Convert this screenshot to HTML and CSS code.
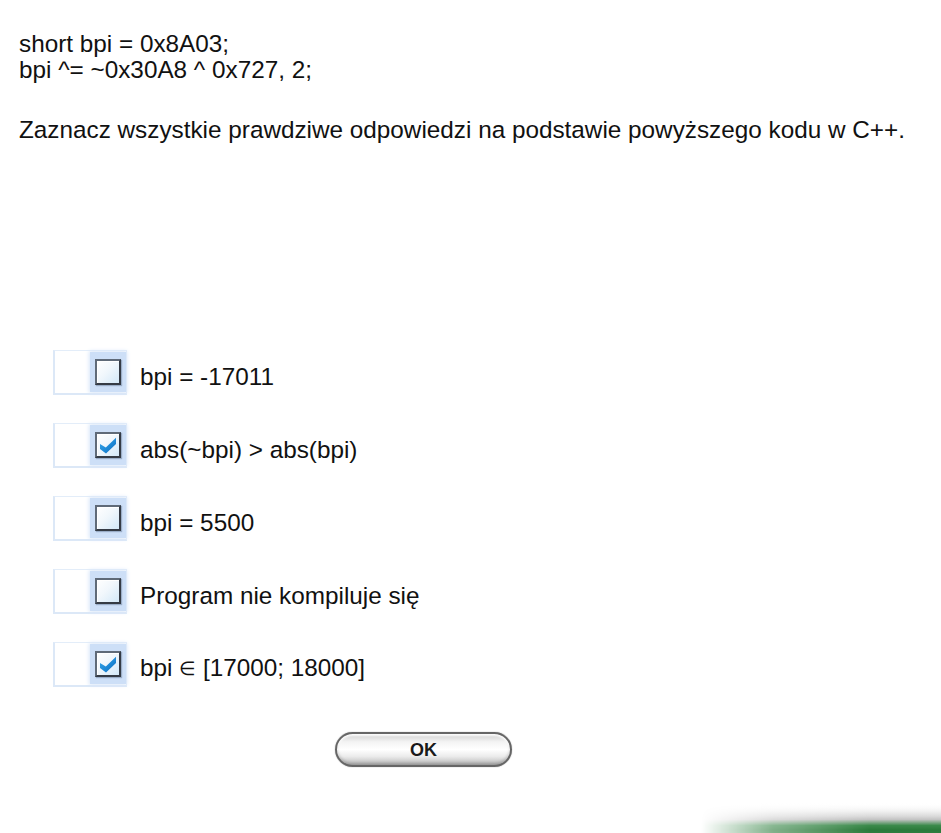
FILE: index.html
```html
<!DOCTYPE html>
<html lang="pl">
<head>
<meta charset="utf-8">
<title>Pytanie</title>
<link rel="stylesheet" href="styles.css">
</head>
<body>
<svg width="0" height="0" class="defs" aria-hidden="true">
  <defs>
    <linearGradient id="tickGrad" x1="0" y1="0" x2="1" y2="1">
      <stop offset="0" stop-color="#3aa7ea"/>
      <stop offset="0.6" stop-color="#1b86d4"/>
      <stop offset="1" stop-color="#1261b0"/>
    </linearGradient>
  </defs>
</svg>
<div class="page">
  <div class="code">
    <div>short bpi = 0x8A03;</div>
    <div>bpi ^= ~0x30A8 ^ 0x727, 2;</div>
  </div>
  <p class="question">Zaznacz wszystkie prawdziwe odpowiedzi na podstawie powyższego kodu w C++.</p>

  <ul class="options">
    <li class="option">
      <span class="cb-frame"><span class="cb-glow"><span class="cb"></span></span></span>
      <span class="label">bpi = -17011</span>
    </li>
    <li class="option">
      <span class="cb-frame"><span class="cb-glow"><span class="cb checked"><svg viewBox="0 0 20 20" class="tick"><path d="M2 9 L7.8 12.6 L18 2.8 L18 9 L8 18.5 L2 14 Z" fill="url(#tickGrad)"/></svg></span></span></span>
      <span class="label">abs(~bpi) &gt; abs(bpi)</span>
    </li>
    <li class="option">
      <span class="cb-frame"><span class="cb-glow"><span class="cb"></span></span></span>
      <span class="label">bpi = 5500</span>
    </li>
    <li class="option">
      <span class="cb-frame"><span class="cb-glow"><span class="cb"></span></span></span>
      <span class="label">Program nie kompiluje się</span>
    </li>
    <li class="option">
      <span class="cb-frame"><span class="cb-glow"><span class="cb checked"><svg viewBox="0 0 20 20" class="tick"><path d="M2 9 L7.8 12.6 L18 2.8 L18 9 L8 18.5 L2 14 Z" fill="url(#tickGrad)"/></svg></span></span></span>
      <span class="label">bpi <span class="elem">∈</span> [17000; 18000]</span>
    </li>
  </ul>

  <div class="actions">
    <button class="ok-btn" type="button">OK</button>
  </div>

  <div class="footer-deco"></div>
</div>
</body>
</html>
```

FILE: styles.css
```css
html, body {
  margin: 0;
  padding: 0;
  background: #fff;
}

.defs {
  position: absolute;
  width: 0;
  height: 0;
}

.page {
  min-height: 833px;
  display: flex;
  flex-direction: column;
  font-family: "Liberation Sans", Arial, sans-serif;
  font-size: 24.3px;
  color: #111;
  box-sizing: border-box;
}

.code {
  padding: 31px 0 0 19px;
  line-height: 26px;
}

.question {
  margin: 34px 0 0 19px;
  line-height: 26px;
}

.options {
  list-style: none;
  margin: 207px 0 0 53px;
  padding: 0;
  display: flex;
  flex-direction: column;
  gap: 28px;
}

.option {
  display: flex;
  align-items: center;
  height: 45px;
  gap: 13px;
}

.label {
  line-height: 26px;
  padding-top: 8px;
}

.elem {
  font-size: 19px;
  position: relative;
  top: -1px;
}

.cb-frame {
  width: 74px;
  height: 45px;
  box-sizing: border-box;
  border: 1px solid #e3edf9;
  border-left: 2px solid #dce8f7;
  border-bottom: 2px solid #dce8f7;
  display: flex;
  justify-content: flex-end;
  align-items: center;
}

.cb-glow {
  width: 36px;
  height: 40px;
  background: #cddff7;
  box-shadow: 0 0 4px 1px #d8e6f9;
  display: flex;
  align-items: center;
  justify-content: center;
}

.cb {
  width: 26px;
  height: 26px;
  box-sizing: border-box;
  border: 2px solid #353b45;
  border-top-color: #5f6a78;
  border-left-color: #5f6a78;
  background: linear-gradient(135deg, #ffffff 0%, #f1f7fc 45%, #d3e8f8 100%);
  box-shadow: inset 1px 1px 0 #ffffff, 1px 1px 1px rgba(60,80,110,0.35);
  display: flex;
  align-items: center;
  justify-content: center;
}

.tick {
  width: 20px;
  height: 20px;
}

.actions {
  margin: 45px 0 0 335px;
}

.ok-btn {
  width: 177px;
  height: 35px;
  border-radius: 18px;
  border: 2px solid #666;
  background: linear-gradient(to bottom, #cfcfcf 0%, #f3f3f3 25%, #ffffff 50%, #ececec 72%, #b5b5b5 100%);
  box-shadow: inset 0 2px 2px rgba(255,255,255,0.9), inset 0 -2px 3px rgba(0,0,0,0.18), 0 0 1px #777;
  font-family: "Liberation Sans", Arial, sans-serif;
  font-weight: bold;
  font-size: 18px;
  color: #1a1a1a;
  padding: 2px 0 0;
}

.footer-deco {
  margin-top: auto;
  align-self: flex-end;
  width: 240px;
  height: 30px;
  background:
    linear-gradient(to bottom, rgba(255,255,255,1) 0%, rgba(255,255,255,0) 55%),
    linear-gradient(to bottom, #ffffff 0%, #c4c4c4 55%, #3b8a4b 75%, #2a7a3a 90%, #2f7e3e 100%);
  -webkit-mask-image: linear-gradient(to right, transparent 0%, rgba(0,0,0,0.6) 30%, #000 70%);
  mask-image: linear-gradient(to right, transparent 0%, rgba(0,0,0,0.6) 30%, #000 70%);
}
```
